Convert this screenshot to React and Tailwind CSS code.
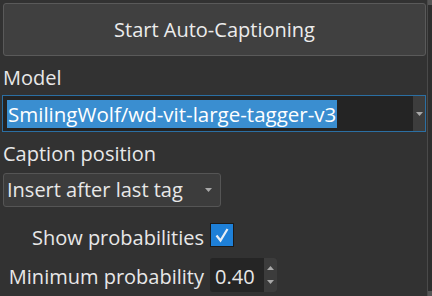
export default function App() {
  return (
    <div
      className="w-[432px] h-[296px] bg-[#323232] text-[#e8e8e8] flex overflow-hidden"
      style={{ fontFamily: '"Open Sans", "Noto Sans", sans-serif' }}
    >
      <div className="flex-1 flex flex-col pl-[3px] pr-[1px] pt-[3px] text-[20px] leading-[24px]">
        {/* action button */}
        <button className="h-[53px] w-full rounded-[3px] border border-[#5a5a5a] bg-[#404040] text-[#ececec] text-[20px]">
          Start Auto-Captioning
        </button>

        <div className="mt-[10px] h-[24px]">Model</div>

        {/* model combo */}
        <div className="mt-[5px] -ml-[1px] h-[37px] flex border border-[#2b6fa3] bg-[#242424]">
          <div className="flex-1 flex items-center pl-[4px]">
            <span className="bg-[#3a8ed0] text-white px-[1px] h-[28px] leading-[28px] text-[20.5px]">
              SmilingWolf/wd-vit-large-tagger-v3
            </span>
          </div>
          <div className="w-[12px] bg-[#3d3d3d] flex items-center justify-center">
            <svg width="7" height="4" viewBox="0 0 7 4">
              <path d="M0 0h7L3.5 4z" fill="#a8a8a8" />
            </svg>
          </div>
        </div>

        <div className="mt-[10px] h-[24px]">Caption position</div>

        {/* caption position combo */}
        <div className="mt-[7px] w-[218px] h-[34px] rounded-[3px] border border-[#555] bg-[#3c3c3c] flex items-center pl-[3px] pr-[8px]">
          <span className="flex-1">Insert after last tag</span>
          <svg width="7" height="4" viewBox="0 0 7 4">
            <path d="M0 0h7L3.5 4z" fill="#a8a8a8" />
          </svg>
        </div>

        {/* show probabilities */}
        <div className="mt-[16px] flex items-start h-[24px]">
          <span className="w-[201px] text-right mt-[3px]">Show probabilities</span>
          <div className="ml-[6px] w-[24px] h-[24px] bg-[#1e80d8] border border-[#1a1a1a] flex items-center justify-center">
            <svg width="16" height="16" viewBox="0 0 16 16">
              <path d="M2.5 8.5l4 5L13.5 2" fill="none" stroke="#e8eef5" strokeWidth="2.2" />
            </svg>
          </div>
        </div>

        {/* minimum probability */}
        <div className="mt-[11px] flex items-start h-[34px]">
          <span className="w-[201px] text-right mt-[7px]">Minimum probability</span>
          <div className="ml-[6px] w-[67px] h-[34px] rounded-[3px] bg-[#252525] flex">
            <div className="flex-1 pl-[5px] pt-[7px]">0.40</div>
            <div className="w-[13px] bg-[#3c3c3c] rounded-r-[3px] flex flex-col items-center justify-center gap-[10px]">
              <svg width="7" height="4" viewBox="0 0 7 4">
                <path d="M0 4h7L3.5 0z" fill="#a8a8a8" />
              </svg>
              <svg width="7" height="4" viewBox="0 0 7 4">
                <path d="M0 0h7L3.5 4z" fill="#a8a8a8" />
              </svg>
            </div>
          </div>
        </div>
      </div>

      {/* scrollbar strip */}
      <div className="w-[5px] flex flex-col border-l border-[#4a4a4a] bg-[#2e2e2e]">
        <div className="h-[5px] bg-[#555]" />
        <div className="flex-1" />
        <div className="h-[5px] bg-[#555]" />
      </div>
    </div>
  );
}
